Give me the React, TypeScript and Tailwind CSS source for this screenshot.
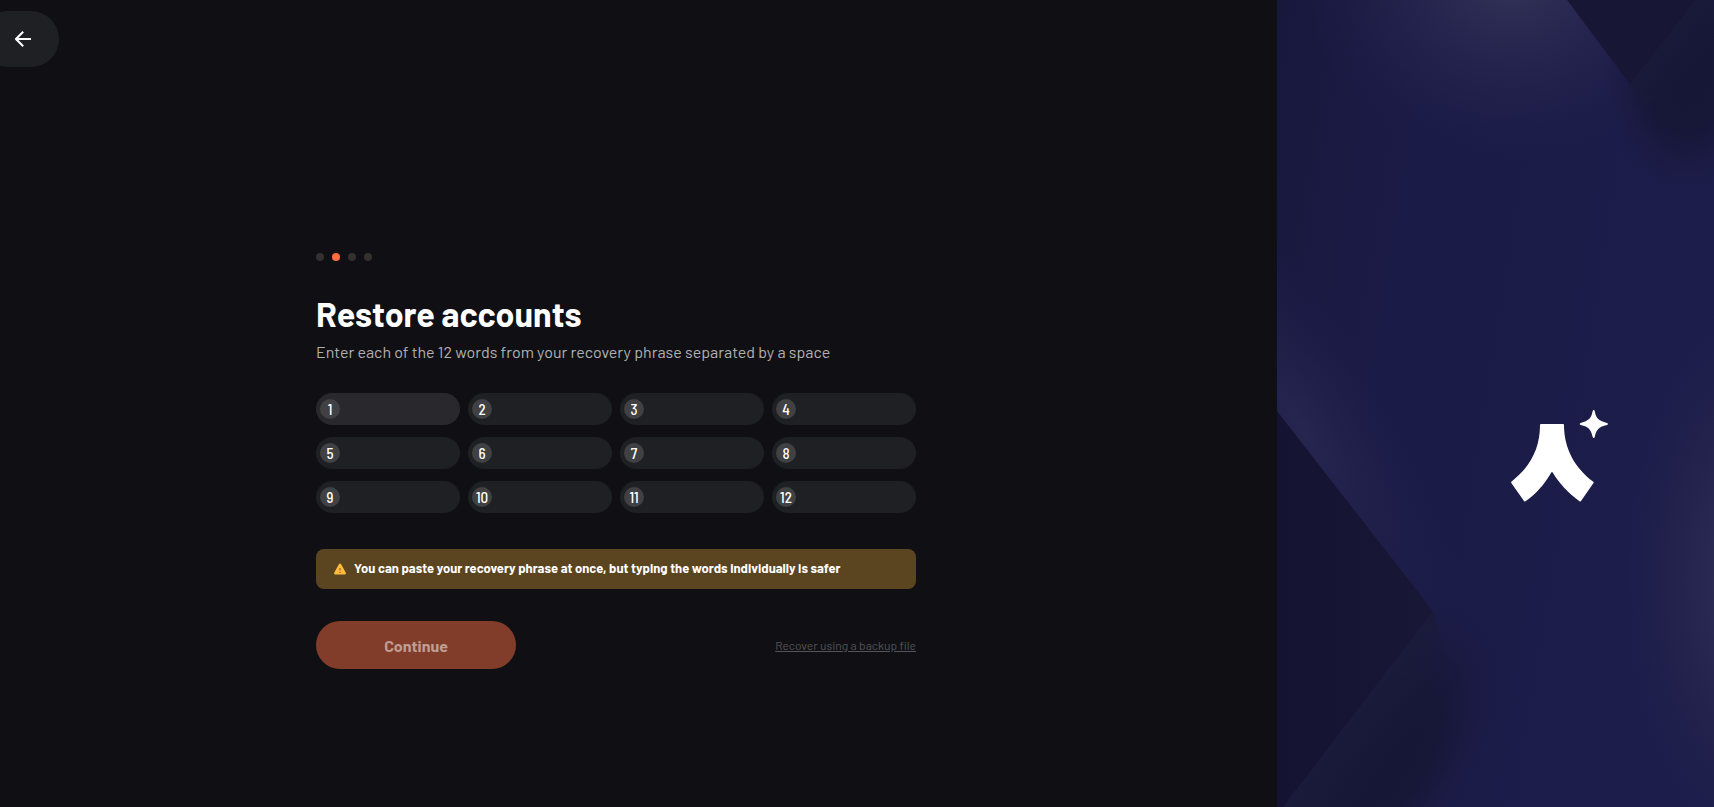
import { useState } from "react";

const WORD_COUNT = 12;

function BackButton() {
  return (
    <button
      type="button"
      aria-label="Back"
      className="-ml-5 flex h-14 w-[79px] items-center rounded-full bg-[#1f2023] pl-[35px] text-white"
    >
      <svg width="16" height="16" viewBox="0 0 16 16" fill="none" stroke="currentColor" strokeWidth="2">
        <path d="M16 8H1.5M8.2 0.7L1 8l7.2 7.3" />
      </svg>
    </button>
  );
}

function Steps({ current }: { current: number }) {
  return (
    <div className="flex gap-2">
      {[0, 1, 2, 3].map((step) => (
        <span
          key={step}
          className={step === current ? "size-2 rounded-full bg-[#ff6b3d]" : "size-2 rounded-full bg-[#33302f]"}
        />
      ))}
    </div>
  );
}

function WarningIcon() {
  return (
    <svg width="12" height="12" viewBox="0 0 12 12" className="shrink-0">
      <path
        d="M5 1.1c.4-.8 1.600-.8 2 0l4.700 8.500c.5.8-.1 1.900-1 1.900H1.300c-.9 0-1.500-1.100-1-1.900z"
        fill="#ffbb3d"
      />
      <path d="M6 5v2.500M6 8.700v1.200" stroke="#8a6524" strokeWidth="1.200" />
    </svg>
  );
}

function Artwork() {
  return (
    <svg
      className="absolute inset-0 size-full"
      viewBox="0 0 437 807"
      preserveAspectRatio="none"
      aria-hidden="true"
    >
      <defs>
        <linearGradient id="base" x1="0" y1="0" x2="1" y2="0.3">
          <stop offset="0" stopColor="#18183d" />
          <stop offset="0.35" stopColor="#1b1b47" />
          <stop offset="1" stopColor="#1d1d4b" />
        </linearGradient>
        <radialGradient id="glow">
          <stop offset="0" stopColor="#343357" />
          <stop offset="0.3" stopColor="#2d2c54" stopOpacity="0.8" />
          <stop offset="0.65" stopColor="#25244d" stopOpacity="0.5" />
          <stop offset="1" stopColor="#1d1d4b" stopOpacity="0" />
        </radialGradient>
        <radialGradient id="softGlow">
          <stop offset="0" stopColor="#272650" />
          <stop offset="0.5" stopColor="#22214b" stopOpacity="0.6" />
          <stop offset="1" stopColor="#1d1d4b" stopOpacity="0" />
        </radialGradient>
        <radialGradient id="shade">
          <stop offset="0" stopColor="#161636" />
          <stop offset="0.5" stopColor="#161636" stopOpacity="0.9" />
          <stop offset="0.8" stopColor="#191940" stopOpacity="0.5" />
          <stop offset="1" stopColor="#1b1b45" stopOpacity="0" />
        </radialGradient>
        <linearGradient id="facet" x1="0" y1="0" x2="1" y2="0">
          <stop offset="0" stopColor="#141432" />
          <stop offset="1" stopColor="#181836" />
        </linearGradient>
        <linearGradient id="sheen" gradientUnits="userSpaceOnUse" x1="81" y1="709" x2="125" y2="743">
          <stop offset="0" stopColor="#1a1a3a" />
          <stop offset="1" stopColor="#1a1a3a" stopOpacity="0" />
        </linearGradient>
        <linearGradient id="topSheen" gradientUnits="userSpaceOnUse" x1="386" y1="42" x2="418" y2="67">
          <stop offset="0" stopColor="#191938" />
          <stop offset="1" stopColor="#191938" stopOpacity="0" />
        </linearGradient>
      </defs>
      <rect width="437" height="807" fill="url(#base)" />
      <ellipse cx="235" cy="-25" rx="215" ry="190" fill="url(#glow)" />
      <ellipse cx="480" cy="580" rx="150" ry="300" fill="url(#glow)" />
      <ellipse cx="25" cy="430" rx="95" ry="270" fill="url(#softGlow)" transform="rotate(-30 25 430)" />
      <ellipse cx="410" cy="70" rx="85" ry="125" fill="url(#shade)" />
      <path d="M418 0h19v50L365 110 353 84z" fill="url(#topSheen)" />
      <path d="M290 0h128L353 84z" fill="#171735" />
      <ellipse cx="95" cy="760" rx="100" ry="185" fill="url(#shade)" transform="rotate(36 95 760)" />
      <path d="M156 611L6 807h110l60-120z" fill="url(#sheen)" />
      <path d="M0 411l156 200L6 807H0z" fill="url(#facet)" />
    </svg>
  );
}

function Logo() {
  return (
    <svg width="98" height="94" viewBox="0 0 98 94" fill="#fff" role="img" aria-label="Logo" className="relative">
      <path d="M31 14h22q1 0 1 1c0 24 11 43 29 56.500q1 .5.5 1.500L71 91q-.5 1-1.500.3C58 83 49 73 42.700 62.500q-.7-1-1.400 0C34 75 26 84 15.500 91.300q-1 .7-1.500-.3L1.300 73q-.5-1 .3-1.600C20 57 30 39 30 15q0-1 1-1z" />
      <path d="M83.700 0q.8 0 1 1c1.300 7 3.300 9.500 12.300 12q1 .3 1 1t-1 1c-8 2-10.500 4-12.300 12q-.2 1-1 1t-1-1c-2-8-4-10-12-12q-1-.3-1-1t1-1c8-2.500 10.500-4.500 12-12q.2-1 1-1z" />
    </svg>
  );
}

export default function App() {
  const [words, setWords] = useState<string[]>(Array(WORD_COUNT).fill(""));

  const updateWord = (index: number, value: string) =>
    setWords(words.map((word, i) => (i === index ? value : word)));

  return (
    <div className="flex min-h-screen bg-[#101014] font-[Barlow,Roboto,sans-serif] text-white">
      <div className="flex flex-1 flex-col overflow-hidden">
        <header className="pt-[11px]">
          <BackButton />
        </header>
        <main className="flex flex-1 items-center justify-center pt-12 pr-[45px]">
          <form className="w-full max-w-[600px]" onSubmit={(event) => event.preventDefault()}>
            <Steps current={1} />
            <h1 className="mt-7 pt-0.5 text-[34px] leading-[46px] font-bold">Restore accounts</h1>
            <p className="mt-1 text-base leading-[22px] text-[#b0b0b2]">
              Enter each of the 12 words from your recovery phrase separated by a space
            </p>
            <div className="mt-[30px] grid grid-cols-4 gap-x-2 gap-y-3">
              {words.map((word, index) => (
                <label
                  key={index}
                  className="flex h-8 items-center rounded-full bg-[#1f2023] pr-3 pl-1 first:bg-[#29282c]"
                >
                  <span className="flex size-5 shrink-0 items-center justify-center rounded-full bg-[#414042] font-['Barlow_Semi_Condensed',Barlow,Roboto,sans-serif] text-[15px] leading-5 font-medium">
                    {index + 1}
                  </span>
                  <input
                    type="text"
                    autoComplete="off"
                    value={word}
                    onChange={(event) => updateWord(index, event.target.value)}
                    className="ml-2 w-full min-w-0 bg-transparent text-sm outline-none"
                  />
                </label>
              ))}
            </div>
            <div className="mt-9 flex h-10 items-center gap-2 rounded-lg bg-[#5a4520] px-[18px]">
              <WarningIcon />
              <p className="pb-0.5 text-[13px] leading-5 font-bold">
                You can paste your recovery phrase at once, but typing the words individually is safer
              </p>
            </div>
            <div className="mt-8 flex items-center justify-between">
              <button
                type="submit"
                disabled
                className="h-12 w-[200px] rounded-full bg-[#823d2a] pt-0.5 text-base font-bold text-[#c09e94]"
              >
                Continue
              </button>
              <a href="#backup" className="text-xs text-[#555457] underline">
                Recover using a backup file
              </a>
            </div>
          </form>
        </main>
      </div>
      <aside className="relative flex w-[437px] shrink-0 items-center justify-center overflow-hidden pt-[107px] pl-[126px]">
        <Artwork />
        <Logo />
      </aside>
    </div>
  );
}
